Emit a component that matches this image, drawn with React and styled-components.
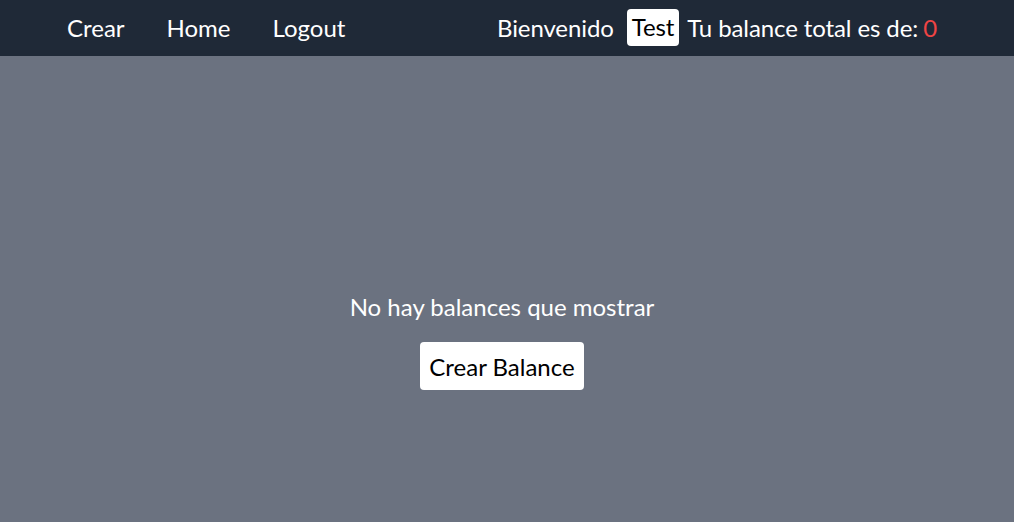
import React from 'react';
import styled, { createGlobalStyle } from 'styled-components';

const GlobalStyle = createGlobalStyle`
  html, body {
    margin: 0;
    padding: 0;
    height: 100%;
    overflow: hidden;
  }
  body {
    font-family: Lato, "Open Sans", sans-serif;
    background: #6b7280;
  }
`;

const Nav = styled.nav`
  height: 56px;
  box-sizing: border-box;
  background: #1f2937;
  display: flex;
  align-items: center;
  justify-content: space-between;
  padding: 0 77px 2px 67px;
  color: #fff;
  font-size: 24px;
`;

const Links = styled.div`
  display: flex;
  gap: 42px;
`;

const NavLink = styled.a`
  color: #fff;
  text-decoration: none;
  cursor: pointer;
`;

const Welcome = styled.div`
  display: flex;
  align-items: center;
  letter-spacing: -0.1px;
`;

const UserName = styled.span`
  background: #fff;
  color: #000;
  border-radius: 4px;
  line-height: 28px;
  padding: 4px 5px 5px;
  margin: 0 8px 0 13px;
`;

const Amount = styled.span`
  color: #ef4444;
  margin-left: 5px;
`;

const Main = styled.main`
  height: calc(100vh - 56px);
  display: flex;
  flex-direction: column;
  align-items: center;
  padding: 235px 10px 0 0;
  box-sizing: border-box;
`;

const Message = styled.p`
  margin: 0;
  color: #fff;
  font-size: 24px;
  line-height: 32px;
`;

const Button = styled.button`
  margin-top: 19px;
  background: #fff;
  color: #000;
  border: none;
  border-radius: 4px;
  font-family: inherit;
  font-size: 24px;
  height: 48px;
  padding: 0 9px;
  cursor: pointer;
`;

export default function App() {
  return (
    <>
      <GlobalStyle />
      <Nav>
        <Links>
          <NavLink>Crear</NavLink>
          <NavLink>Home</NavLink>
          <NavLink>Logout</NavLink>
        </Links>
        <Welcome>
          Bienvenido
          <UserName>Test</UserName>
          Tu balance total es de:
          <Amount>0</Amount>
        </Welcome>
      </Nav>
      <Main>
        <Message>No hay balances que mostrar</Message>
        <Button>Crear Balance</Button>
      </Main>
    </>
  );
}
